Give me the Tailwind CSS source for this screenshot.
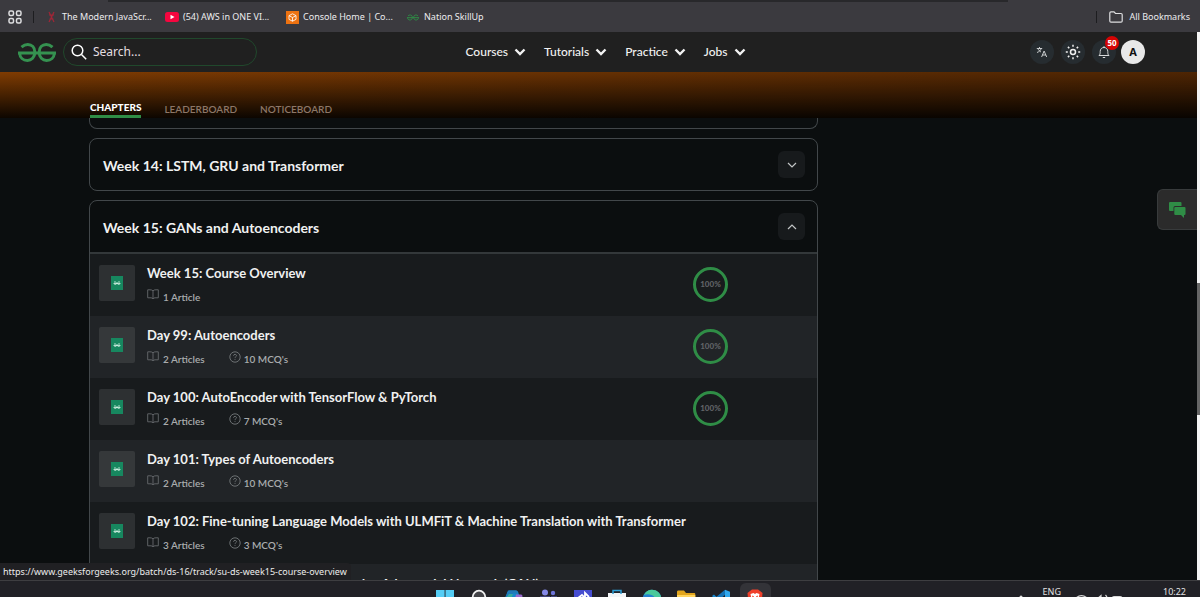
<!DOCTYPE html>
<html lang="en">
<head>
<meta charset="utf-8">
<meta name="viewport" content="width=device-width, initial-scale=1">
<title>Nation SkillUp</title>
<script src="https://cdn.jsdelivr.net/npm/@tailwindcss/browser@4"></script>
</head>
<body class="flex h-screen flex-col overflow-hidden bg-[#0b0e0f] font-['Lato',sans-serif] text-white">

<svg class="hidden" aria-hidden="true">
  <symbol id="gfg" viewBox="0 0 38 19">
    <g fill="none" stroke="currentColor" stroke-width="3">
      <path d="M3.5 4.2C5.5 2.4 7.6 1.5 9.8 1.5c4.1 0 7 3.1 7 7.6v.4"/>
      <path d="M34.5 4.2c-2-1.8-4.1-2.7-6.3-2.7-4.1 0-7 3.1-7 7.6v.4"/>
      <path d="M0 10h38"/>
      <path d="M1.6 10c.3 4.500 3.500 7.500 7.700 7.500s7.500-3.200 7.500-8"/>
      <path d="M36.400 10c-.3 4.500-3.500 7.500-7.700 7.500s-7.500-3.200-7.500-8"/>
    </g>
  </symbol>
  <symbol id="down" viewBox="0 0 12 8"><path d="M1.500 1.500 6 6l4.500-4.500" fill="none" stroke="currentColor" stroke-width="2.400"/></symbol>
  <symbol id="book" viewBox="0 0 12 11"><path d="M6 1.800C5.300 1 4.300.8 3 .8H.7v8H4c1 0 1.600.4 2 1.200.4-.8 1-1.200 2-1.200h3.300v-8H9C7.700.8 6.700 1 6 1.800ZM6 2v8" fill="none" stroke="currentColor" stroke-width=".9"/></symbol>
  <symbol id="help" viewBox="0 0 12 12"><g fill="none" stroke="currentColor" stroke-width=".9"><circle cx="6" cy="6" r="5.200"/><path d="M4.500 4.700c.1-.9.700-1.300 1.500-1.300.9 0 1.500.5 1.500 1.300 0 1-1.500 1.100-1.500 2.100M6 7.900v.9"/></g></symbol>
  <symbol id="doc" viewBox="0 0 12 14"><path d="M0 0h12v14H0z" fill="#17875f"/><path d="M3 6.100c1.500-.6 2.600.3 2.600 1.200 0 1.500-2.400 1.500-2.800.2h6.400c-.4 1.300-2.800 1.300-2.800-.2 0-.9 1.100-1.800 2.600-1.200" fill="none" stroke="#d5f3e6" stroke-width=".8"/></symbol>
</svg>

<!-- Browser bookmarks -->
<div class="h-8 shrink-0 bg-[#3b3a3f] font-['Noto_Sans',sans-serif] text-[9px] text-[#ececee]">
  <div class="mr-[192px] ml-[108px] h-[2px] bg-[#28282b]"></div>
  <div class="flex h-[30px] items-center pr-[10px] pl-2">
    <button aria-label="Apps" class="w-[14px]">
      <svg viewBox="0 0 14 14" class="size-[14px]" fill="none" stroke="#dedee0" stroke-width="1.500"><rect x="1" y="1" width="4.500" height="4.500" rx="1.500"/><rect x="8.500" y="1" width="4.500" height="4.500" rx="1.500"/><rect x="1" y="8.500" width="4.500" height="4.500" rx="1.500"/><rect x="8.500" y="8.500" width="4.500" height="4.500" rx="1.500"/></svg>
    </button>
    <span class="ml-[11px] h-3 w-px bg-[#1d1d20]"></span>
    <a href="#" class="ml-[10px] flex w-[118px] items-center gap-1 whitespace-nowrap"><svg viewBox="0 0 14 14" class="size-[14px]" fill="none" stroke="#a02637" stroke-width="1.200"><path d="m5 2 5 10M10 2 5 12M5 5h5M5.500 9h4"/></svg>The Modern JavaScr...</a>
    <a href="#" class="ml-[3px] flex w-[120px] items-center gap-1 whitespace-nowrap"><svg viewBox="0 0 14 10" class="h-[10px] w-[14px]"><rect width="14" height="10" rx="2.500" fill="#f5063f"/><path d="m5.500 2.800 4 2.200-4 2.200z" fill="#fff"/></svg>(54) AWS in ONE VI...</a>
    <a href="#" class="ml-[1px] flex w-[120px] items-center gap-1 whitespace-nowrap"><svg viewBox="0 0 14 14" class="size-[13px]"><path d="M0 0h14v14H0z" fill="#ed7211"/><path d="m7 3 3.800 2v4L7 11 3.200 9V5zM3.200 5 7 7l3.800-2M7 7v4" fill="none" stroke="#fff" stroke-width=".9"/></svg>Console Home | Co...</a>
    <a href="#" class="ml-[1px] flex items-center gap-[5px] whitespace-nowrap"><svg class="h-[7px] w-3 text-[#2f8d46]"><use href="#gfg"/></svg>Nation SkillUp</a>
    <span class="ml-auto h-3 w-px bg-[#1d1d20]"></span>
    <a href="#" class="ml-3 flex items-center gap-[6px] whitespace-nowrap"><svg viewBox="0 0 14 12" class="h-3 w-[14px]" fill="none" stroke="#dedee0" stroke-width="1.200"><path d="M.8 10V2c0-.7.4-1.200 1.200-1.200h3L6.500 2.500H12c.8 0 1.200.5 1.200 1.200V10c0 .8-.4 1.200-1.200 1.200H2C1.200 11.200.8 10.800.8 10Z"/></svg>All Bookmarks</a>
  </div>
</div>

<div class="flex min-h-0 flex-1">
  <div class="relative flex min-w-0 flex-1 flex-col">

    <!-- Site header -->
    <header class="flex h-10 shrink-0 items-center bg-[#202020] pr-[52px] pl-[18px]">
      <div class="flex flex-1 items-center gap-[7px]">
        <a href="#" aria-label="Home"><svg class="h-[19px] w-[38px] text-[#359250]"><use href="#gfg"/></svg></a>
        <label class="flex h-7 w-[194px] items-center gap-[6px] rounded-full border border-[#20482c] pl-[7px]">
          <svg viewBox="0 0 16 16" class="size-4 shrink-0" fill="none" stroke="#fff" stroke-width="1.500"><circle cx="6.500" cy="6.500" r="5.300"/><path d="m10.500 10.500 4.700 4.700"/></svg>
          <input type="text" aria-label="Search" placeholder="Search..." class="w-full bg-transparent font-['Noto_Sans',sans-serif] text-[12px] outline-none placeholder:text-[#e5dfe0]">
        </label>
      </div>
      <nav class="flex gap-[18px] pl-12 text-[12px] font-medium text-[#f2f2f2]">
        <button class="flex items-center gap-[6px]">Courses<svg class="h-2 w-3"><use href="#down"/></svg></button>
        <button class="flex items-center gap-[6px]">Tutorials<svg class="h-2 w-3"><use href="#down"/></svg></button>
        <button class="flex items-center gap-[6px]">Practice<svg class="h-2 w-3"><use href="#down"/></svg></button>
        <button class="flex items-center gap-[6px]">Jobs<svg class="h-2 w-3"><use href="#down"/></svg></button>
      </nav>
      <div class="flex flex-1 items-center justify-end gap-[7px]">
        <button aria-label="Language" class="flex size-6 items-center justify-center rounded-full bg-[#262c30]"><svg viewBox="0 0 12 12" class="size-3" fill="none" stroke="#d8dadb" stroke-width=".9"><path d="M.8 2.500h5.400M3.500 1v1.500M5.200 2.500C4.600 4.500 3 5.800 1 6.500M2 2.700c.6 1.600 1.700 2.700 3 3.300M5.600 11l2.500-6 2.600 6M6.400 9h3.500"/></svg></button>
        <button aria-label="Theme" class="flex size-6 items-center justify-center rounded-full bg-[#262c30]"><svg viewBox="0 0 16 16" class="size-4" fill="none" stroke="#f0f0f0" stroke-width="1.500"><circle cx="8" cy="8" r="2.500"/><path d="M8 .8v2M8 13.200v2M.8 8h2M13.200 8h2M2.900 2.900l1.400 1.400M11.700 11.700l1.400 1.400M2.900 13.100l1.400-1.400M11.700 4.300l1.400-1.400"/></svg></button>
        <button aria-label="Notifications" class="relative flex size-6 items-center justify-center rounded-full bg-[#262c30]"><svg viewBox="0 0 12 14" class="h-[14px] w-3" fill="none" stroke="#d8dadb" stroke-width="1"><path d="M1 10.500c1.200-1 1.200-2.300 1.200-4C2.200 4 3.800 2.500 6 2.500S9.800 4 9.800 6.500c0 1.700 0 3 1.200 4zM6 2.500V1.200M4.800 12.500h2.400"/></svg>
          <span class="absolute -top-[4px] -right-[3px] flex size-[14px] items-center justify-center rounded-full bg-[#d50404] font-['Noto_Sans',sans-serif] text-[8px] font-bold">50</span></button>
        <button aria-label="Account" class="-ml-[2px] flex size-6 items-center justify-center rounded-full bg-[#e8e8e8] font-['Noto_Sans',sans-serif] text-[11px] font-bold text-[#111]">A</button>
      </div>
    </header>

    <!-- Course tabs -->
    <div class="shrink-0 bg-linear-to-r from-[#803c02] to-[#4e2503]">
      <div class="flex h-[46px] items-end gap-[23px] bg-linear-to-b from-transparent to-black/90 pl-[90px] text-[10px] leading-[14px] text-[#8d7768]">
        <a href="#" class="border-b-3 border-[#2f8d46] pb-[1px] font-black text-white">CHAPTERS</a>
        <a href="#" class="pb-[2px] font-semibold">LEADERBOARD</a>
        <a href="#" class="pb-[2px] font-semibold">NOTICEBOARD</a>
      </div>
    </div>

    <!-- Chapters -->
    <main class="flex min-h-0 flex-1 flex-col overflow-hidden pl-[89px]">
      <div class="h-[11px] w-full max-w-[729px] shrink-0 rounded-b-lg border border-t-0 border-[#42474a]"></div>

      <section class="mt-[9px] flex h-[53px] w-full max-w-[729px] shrink-0 items-center justify-between rounded-lg border border-[#42474a] px-3">
        <h2 class="pt-[2px] pl-[1px] text-[14px] font-bold text-[#f0f1f1]">Week 14: LSTM, GRU and Transformer</h2>
        <button aria-label="Expand week 14" class="flex size-[27px] items-center justify-center rounded-md bg-[#171a1c]"><svg viewBox="0 0 10 6" class="h-[6px] w-[10px]" fill="none" stroke="#c2c5c6" stroke-width="1.200"><path d="m1 1 4 4 4-4"/></svg></button>
      </section>

      <section class="mt-[9px] w-full max-w-[729px] shrink-0 rounded-t-lg border border-[#42474a]">
        <div class="flex h-[53px] items-center justify-between border-b-2 border-[#33383a] px-3">
          <h2 class="pt-[2px] pl-[1px] text-[14px] font-bold text-[#f0f1f1]">Week 15: GANs and Autoencoders</h2>
          <button aria-label="Collapse week 15" class="flex size-[27px] items-center justify-center rounded-md bg-[#171a1c]"><svg viewBox="0 0 10 6" class="h-[6px] w-[10px]" fill="none" stroke="#c2c5c6" stroke-width="1.200"><path d="m1 5 4-4 4 4"/></svg></button>
        </div>
        <ul class="text-[13px] leading-4 font-bold text-[#f0f1f1] *:flex *:h-[62px] *:gap-3 *:pt-[11px] *:pr-[89px] *:pl-[9px] *:odd:bg-[#181b1d] *:even:bg-[#212427] *:last:pt-3">
          <li>
            <span class="flex size-9 shrink-0 items-center justify-center rounded-xs bg-[#2d3032]"><svg class="h-[14px] w-3"><use href="#doc"/></svg></span>
            <div class="flex-1"><h3><a href="#">Week 15: Course Overview</a></h3>
              <p class="mt-2 flex gap-6 text-[10px] font-semibold text-[#a9acae]"><span class="flex gap-1"><svg class="h-[11px] w-3 text-[#666a6d]"><use href="#book"/></svg>1 Article</span></p></div>
            <span class="mt-[2px] flex size-[35px] items-center justify-center rounded-full border-3 border-[#2f8d46] pb-[2px] text-[8px] font-black text-[#606366]">100%</span>
          </li>
          <li>
            <span class="flex size-9 shrink-0 items-center justify-center rounded-xs bg-[#35383a]"><svg class="h-[14px] w-3"><use href="#doc"/></svg></span>
            <div class="flex-1"><h3><a href="#">Day 99: Autoencoders</a></h3>
              <p class="mt-2 flex gap-6 text-[10px] font-semibold text-[#a9acae]"><span class="flex gap-1"><svg class="h-[11px] w-3 text-[#666a6d]"><use href="#book"/></svg>2 Articles</span><span class="flex gap-[3px]"><svg class="size-3 text-[#75797c]"><use href="#help"/></svg>10 MCQ's</span></p></div>
            <span class="mt-[2px] flex size-[35px] items-center justify-center rounded-full border-3 border-[#2f8d46] pb-[2px] text-[8px] font-black text-[#606366]">100%</span>
          </li>
          <li>
            <span class="flex size-9 shrink-0 items-center justify-center rounded-xs bg-[#2d3032]"><svg class="h-[14px] w-3"><use href="#doc"/></svg></span>
            <div class="flex-1"><h3><a href="#">Day 100: AutoEncoder with TensorFlow &amp; PyTorch</a></h3>
              <p class="mt-2 flex gap-6 text-[10px] font-semibold text-[#a9acae]"><span class="flex gap-1"><svg class="h-[11px] w-3 text-[#666a6d]"><use href="#book"/></svg>2 Articles</span><span class="flex gap-[3px]"><svg class="size-3 text-[#75797c]"><use href="#help"/></svg>7 MCQ's</span></p></div>
            <span class="mt-[2px] flex size-[35px] items-center justify-center rounded-full border-3 border-[#2f8d46] pb-[2px] text-[8px] font-black text-[#606366]">100%</span>
          </li>
          <li>
            <span class="flex size-9 shrink-0 items-center justify-center rounded-xs bg-[#35383a]"><svg class="h-[14px] w-3"><use href="#doc"/></svg></span>
            <div class="flex-1"><h3><a href="#">Day 101: Types of Autoencoders</a></h3>
              <p class="mt-2 flex gap-6 text-[10px] font-semibold text-[#a9acae]"><span class="flex gap-1"><svg class="h-[11px] w-3 text-[#666a6d]"><use href="#book"/></svg>2 Articles</span><span class="flex gap-[3px]"><svg class="size-3 text-[#75797c]"><use href="#help"/></svg>10 MCQ's</span></p></div>
          </li>
          <li>
            <span class="flex size-9 shrink-0 items-center justify-center rounded-xs bg-[#2d3032]"><svg class="h-[14px] w-3"><use href="#doc"/></svg></span>
            <div class="flex-1"><h3><a href="#">Day 102: Fine-tuning Language Models with ULMFiT &amp; Machine Translation with Transformer</a></h3>
              <p class="mt-2 flex gap-6 text-[10px] font-semibold text-[#a9acae]"><span class="flex gap-1"><svg class="h-[11px] w-3 text-[#666a6d]"><use href="#book"/></svg>3 Articles</span><span class="flex gap-[3px]"><svg class="size-3 text-[#75797c]"><use href="#help"/></svg>3 MCQ's</span></p></div>
          </li>
          <li>
            <span class="flex size-9 shrink-0 items-center justify-center rounded-xs bg-[#35383a]"><svg class="h-[14px] w-3"><use href="#doc"/></svg></span>
            <div class="flex-1"><h3><a href="#">Day 103: Introduction to the Generative Adversarial Network (GAN)</a></h3></div>
          </li>
        </ul>
      </section>
    </main>

    <button aria-label="Open chat" class="absolute top-[157px] right-0 flex h-[41px] w-10 items-center justify-center rounded-l-md border border-r-0 border-[#383b3c] bg-[#2b2b2b]">
      <svg viewBox="0 0 17 16" class="h-4 w-[17px]"><path d="M1 0h10.500a1 1 0 0 1 1 1v3H6a1.500 1.500 0 0 0-1.500 1.500V9H1a1 1 0 0 1-1-1V1a1 1 0 0 1 1-1Z" fill="#2f8d46"/><path d="M6.300 5H15.500a1 1 0 0 1 1 1v6a1 1 0 0 1-1 1H15v3l-3-3H6.300a1 1 0 0 1-1-1V6a1 1 0 0 1 1-1Z" fill="#2f8d46"/></svg>
    </button>

    <div class="absolute bottom-0 left-0 flex h-[17px] items-center rounded-tr-sm bg-[#202023] pr-1 pl-[3px] font-['Noto_Sans',sans-serif] text-[9px] whitespace-nowrap text-[#ececec]">https://www.geeksforgeeks.org/batch/ds-16/track/su-ds-week15-course-overview</div>
  </div>

  <!-- Page scrollbar -->
  <div class="flex w-[3px] shrink-0 flex-col bg-[#f4f4f4] pt-[251px]"><span class="h-[132px] bg-[#666]"></span></div>
</div>

<!-- Taskbar -->
<footer class="relative flex h-[17px] shrink-0 justify-center overflow-hidden border-t border-[#3e3e41] bg-[#212126] font-['Noto_Sans',sans-serif] text-[9px] text-[#e2e2e2]">
  <div class="grid h-10 w-[345px] grid-cols-10 justify-items-center *:mt-2 *:size-5">
    <svg viewBox="0 0 20 20"><path d="M1 1h8.600v9H1zM10.500 1H19v9h-8.500z" fill="#55cdf5"/></svg>
    <svg viewBox="0 0 20 20"><circle cx="10" cy="8" r="6.300" fill="#444448" stroke="#f0f0f0" stroke-width="1.800"/></svg>
    <svg viewBox="0 0 20 20"><path d="M4 1.500h8c1.500 0 2 .8 2.600 3L16 9H1z" fill="#1788c9"/><path d="M6 1.500h6.500l1.500 3H9L7.500 9H1c2-2 2-7.500 5-7.500Z" fill="#1f78b8"/><path d="M5 5h4L7.500 9H2z" fill="#35a99d"/><path d="M12 5.500h5c2 0 1.500 3 1 4.500h-7z" fill="#9868cb"/></svg>
    <svg viewBox="0 0 20 20"><circle cx="7" cy="3.500" r="3" fill="#8589e8"/><circle cx="15" cy="4" r="2.200" fill="#6e75d8"/><path d="M2 7.500h10V12H2zM13 7.500h6V12h-6z" fill="#6267c9"/></svg>
    <svg viewBox="0 0 20 20"><path d="M1 1h18v19H1z" fill="#464dd0"/><path d="m5 9 4-3 3 3V4l4 4" fill="none" stroke="#fff" stroke-width="1.800"/></svg>
    <svg viewBox="0 0 20 20"><path d="M1 4h18v15H1z" fill="#f3f5f7"/><path d="M6 5V1.500h8V5" fill="none" stroke="#2c9fd8" stroke-width="1.500"/></svg>
    <svg viewBox="0 0 20 20"><circle cx="10" cy="10" r="9.300" fill="#2381cf"/><path d="M2 6C4 2 7 .7 10 .7c6 0 9.300 4.500 9.300 9.300H13c0-4-7-6-11-4Z" fill="#4ac99b"/></svg>
    <svg viewBox="0 0 20 20"><path d="M1 3c0-1 .5-1.500 1.500-1.500H8l2 2.500h8c.8 0 1.300.5 1.300 1.300V19H1z" fill="#e2a51d"/><path d="M1 6h18.300v13H1z" fill="#ffd35c"/></svg>
    <svg viewBox="0 0 20 20"><path d="m14 .8 5 2V19h-5z" fill="#31a8ee"/><path d="M14 .8v5L5 14 1.500 11z" fill="#1573b8"/><path d="m1 7 2-1.500L12 14v5z" fill="#1787ce"/></svg>
    <span class="mt-[2px]! flex h-10! w-[31px]! justify-center rounded-t-md bg-[#333338] pt-[6px]"><svg viewBox="0 0 20 20" class="size-5"><path d="m5 2 2-1.500h6L15 2l2.500 2-.5 6-7 8-7-8-.5-6z" fill="#f0402a"/><path d="m5.500 5 3-1L10 5l1.500-1 3 1-1 5-3.500 3-3.500-3z" fill="#fff"/><path d="m7 7 2 1M13 7l-2 1" stroke="#f0402a"/></svg></span>
  </div>
  <div class="absolute top-[4px] right-[14px] flex items-start leading-[14px]">
    <svg viewBox="0 0 12 8" class="mt-[9px] mr-4 h-2 w-3" fill="none" stroke="#e2e2e2" stroke-width="1.200"><path d="m2 6 4-4 4 4"/></svg>
    <span class="mr-[13px]">ENG</span>
    <svg viewBox="0 0 50 12" class="mt-[9px] mr-[39px] h-3 w-[50px]" fill="none" stroke="#d8d8d8" stroke-width="1.200"><path d="M1 5c4-4.500 9-4.500 13 0M3.500 7c2.500-2.500 5.500-2.500 8 0M20 5h3l4-3.500V12M29 3c1.500 2 1.500 4 0 6M31.500 1c2.500 3 2.500 7 0 10"/><rect x="38" y="2.500" width="10" height="8" rx="2"/></svg>
    <time>10:22</time>
  </div>
</footer>
</body>
</html>
